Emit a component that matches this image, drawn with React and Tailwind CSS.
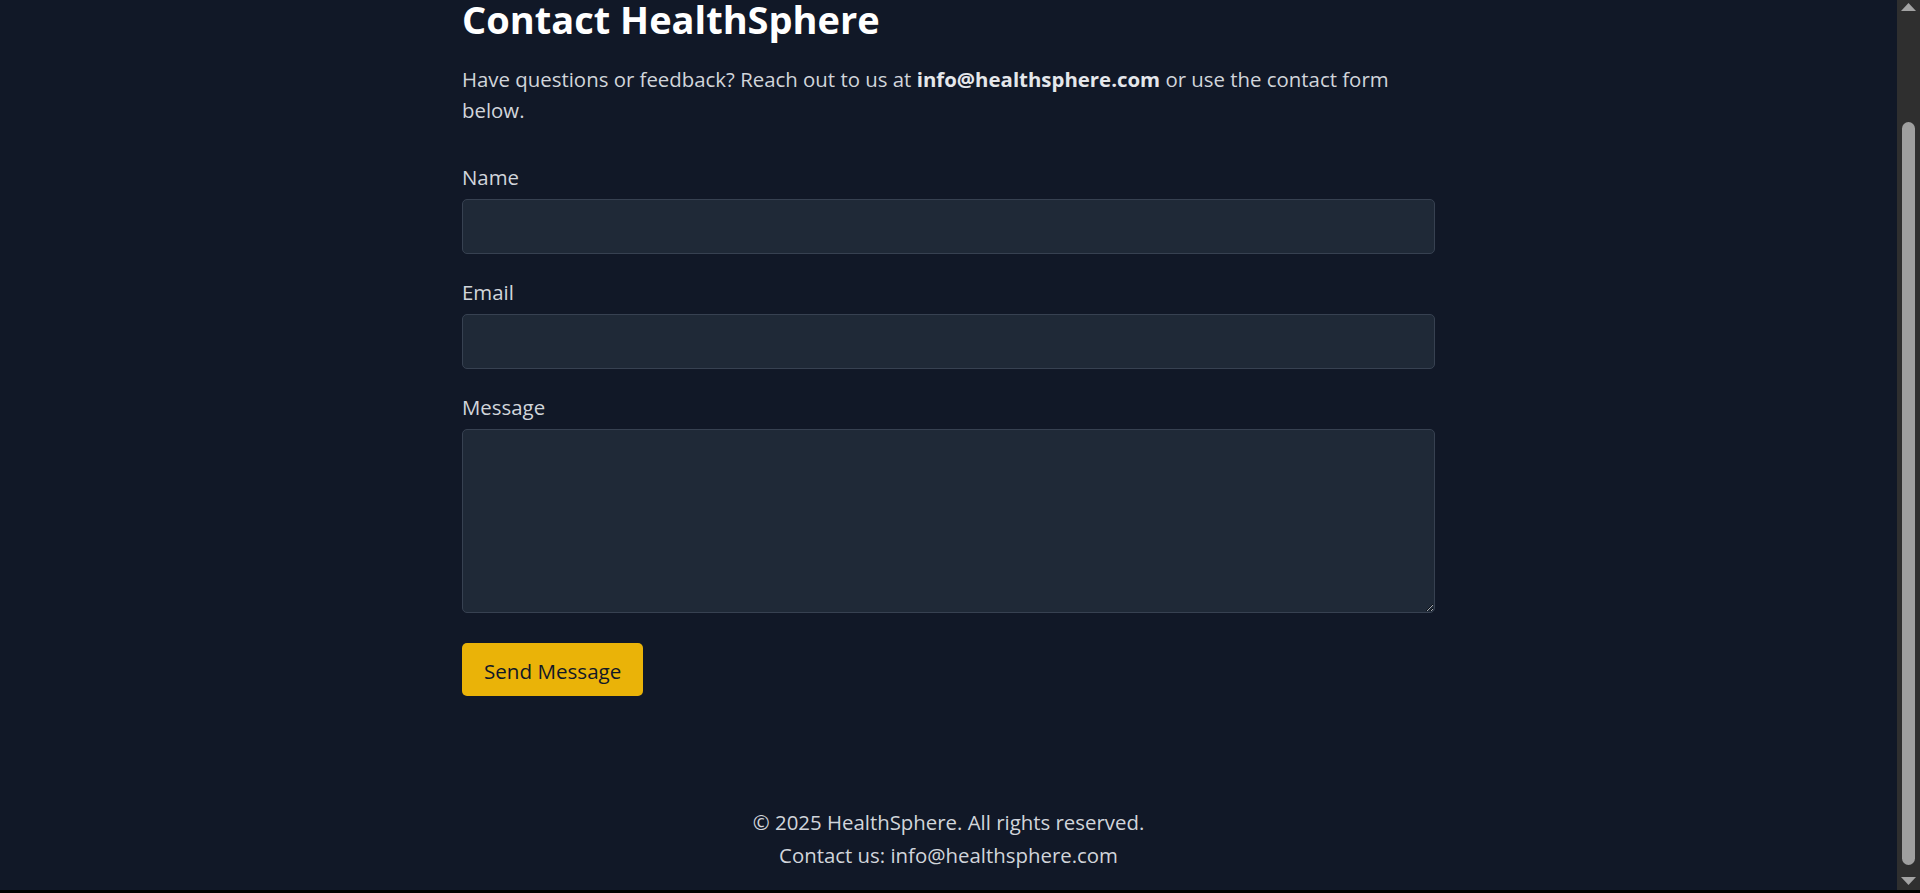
import React from "react";

function Field({ label, children }) {
  return (
    <div className="flex flex-col">
      <label className="mb-[7px] text-[20.4px] leading-[30px] text-[#d1d5db]">{label}</label>
      {children}
    </div>
  );
}

export default function App() {
  return (
    <div className="flex h-[893px] flex-col bg-black font-['Open_Sans',sans-serif]">
      <div className="flex h-[890px]">
        <div className="flex flex-1 flex-col bg-[#111827]">
          <main className="mx-auto w-[973px]">
            <h1 className="text-[38px] font-bold leading-[38px] text-white">Contact HealthSphere</h1>
            <p className="mt-[26px] max-w-[960px] text-[20.4px] leading-[31px] text-[#d1d5db]">
              Have questions or feedback? Reach out to us at{" "}
              <strong className="font-bold text-[#e5e7eb]">info@healthsphere.com</strong> or use the contact form
              below.
            </p>
            <form className="mt-[36px] flex flex-col gap-[23px]" onSubmit={(e) => e.preventDefault()}>
              <Field label="Name">
                <input
                  type="text"
                  className="h-[55px] w-full rounded-[5px] border border-[#374151] bg-[#1f2937] px-4 text-[20px] text-white outline-none"
                />
              </Field>
              <Field label="Email">
                <input
                  type="email"
                  className="h-[55px] w-full rounded-[5px] border border-[#374151] bg-[#1f2937] px-4 text-[20px] text-white outline-none"
                />
              </Field>
              <Field label="Message">
                <textarea className="h-[184px] w-full rounded-[5px] border border-[#374151] bg-[#1f2937] px-4 py-3 text-[20px] text-white outline-none" />
              </Field>
              <div className="mt-[7px]">
                <button
                  type="submit"
                  className="flex h-[53px] items-center rounded-[5px] bg-[#eab308] px-[22px] pt-[3px] text-[20.6px] text-[#111827]"
                >
                  Send Message
                </button>
              </div>
            </form>
          </main>
          <footer className="mt-auto pb-[20px] text-center text-[20.4px] leading-[30px] text-[#d1d5db]">
            <p>© 2025 HealthSphere. All rights reserved.</p>
            <p className="mt-[3px]">Contact us: info@healthsphere.com</p>
          </footer>
        </div>
        <div className="flex w-[23px] flex-col items-center bg-[#2f2f2f]">
          <svg className="mt-[3px]" width="15" height="8" viewBox="0 0 15 8">
            <polygon points="7.5,0 15,8 0,8" fill="#a3a3a3" />
          </svg>
          <div className="mt-[111px] h-[743px] w-[13px] rounded-full bg-[#9f9f9f]" />
          <svg className="mt-[12px]" width="15" height="8" viewBox="0 0 15 8">
            <polygon points="0,0 15,0 7.5,8" fill="#a3a3a3" />
          </svg>
        </div>
      </div>
    </div>
  );
}
